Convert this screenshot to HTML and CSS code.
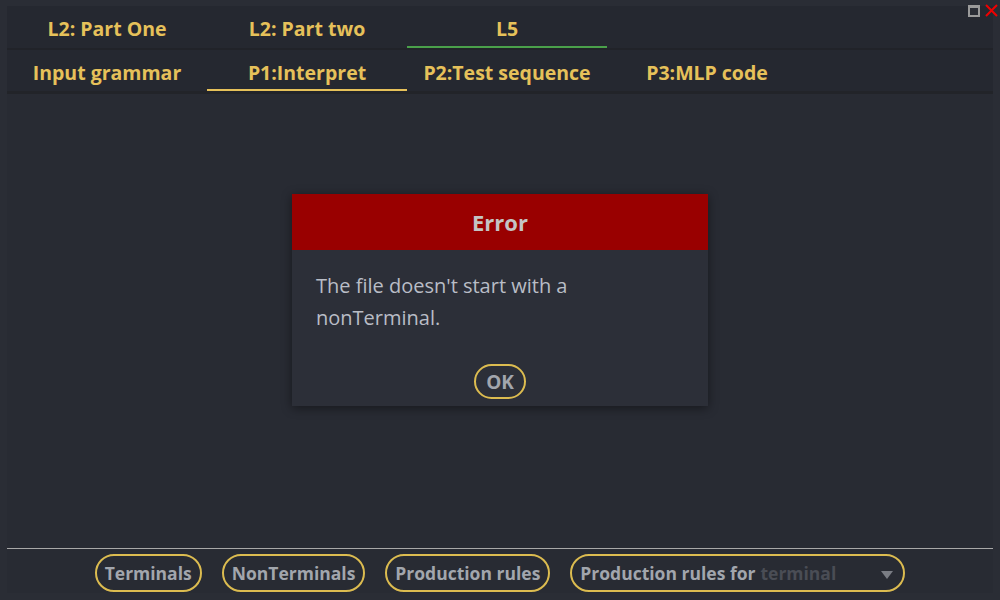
FILE: index.html
```html
<!DOCTYPE html>
<html>
<head>
<meta charset="utf-8">
<link rel="stylesheet" href="styles.css">
</head>
<body>
<div class="app">
  <div class="winctl">
    <span class="max"></span>
    <svg class="close" width="13" height="13" viewBox="0 0 13 13"><path d="M1 1L12 12M12 1L1 12" stroke="#f00000" stroke-width="2"/></svg>
  </div>
  <div class="panel">
    <div class="tabs top">
      <div class="tab">L2: Part One</div>
      <div class="tab">L2: Part two</div>
      <div class="tab active-green">L5</div>
    </div>
    <div class="tabs sub">
      <div class="tab">Input grammar</div>
      <div class="tab active-yellow">P1:Interpret</div>
      <div class="tab">P2:Test sequence</div>
      <div class="tab">P3:MLP code</div>
    </div>
    <div class="content">
      <div class="dialog">
        <div class="dlg-head">Error</div>
        <div class="dlg-body">The file doesn't start with a nonTerminal.</div>
        <div class="dlg-foot"><button class="pill ok">OK</button></div>
      </div>
    </div>
    <div class="footer">
      <button class="pill">Terminals</button>
      <button class="pill">NonTerminals</button>
      <button class="pill">Production rules</button>
      <div class="pill select">Production rules for <span class="ph">terminal</span><span class="arrow"></span></div>
    </div>
  </div>
</div>
</body>
</html>
```
FILE: styles.css
```css
* { box-sizing: border-box; }
html, body { margin: 0; padding: 0; }
body {
  width: 1000px;
  height: 600px;
  background: #2a2d35;
  font-family: "Open Sans", "Noto Sans", sans-serif;
  overflow: hidden;
}
.app {
  position: relative;
  width: 1000px;
  height: 600px;
  padding: 6px 7px 7px 7px;
}
.winctl {
  position: absolute;
  top: 4px;
  right: 2px;
  display: flex;
  gap: 5px;
  align-items: center;
}
.max {
  width: 12px;
  height: 12px;
  border: 2px solid #9a9a9a;
  border-top-width: 3px;
  background: #2a2d35;
}
.panel {
  width: 986px;
  height: 587px;
  background: #282b33;
  display: flex;
  flex-direction: column;
}
.tabs {
  display: flex;
  background: #252830;
}
.tabs.top {
  height: 44px;
  border-bottom: 2px solid #212329;
}
.tabs.sub {
  height: 44px;
  border-bottom: 3px solid #222429;
}
.tab {
  width: 200px;
  text-align: center;
  color: #e6c15a;
  font-weight: 700;
  font-size: 19.5px;
  height: 42px;
}
.tabs.top .tab { line-height: 46px; height: 42px; }
.tabs.sub .tab { line-height: 46px; height: 41px; }
.active-green { box-shadow: inset 0 -2px 0 #4aa04a; }
.active-yellow { box-shadow: inset 0 -2px 0 #e6c15a; }
.content {
  flex: 1;
  display: flex;
  justify-content: center;
  align-items: flex-start;
  padding-top: 100px;
  border-bottom: 1px solid #a8a8a8;
}
.dialog {
  width: 416px;
  background: #2c2f38;
  box-shadow: 0 2px 10px rgba(0,0,0,0.45);
}
.dlg-head {
  height: 56px;
  background: #990000;
  color: #c4c4c4;
  font-weight: 700;
  font-size: 22px;
  text-align: center;
  line-height: 56px;
}
.dlg-body {
  padding: 20px 110px 0 24px;
  color: #b9bdc6;
  font-size: 20px;
  line-height: 32px;
  height: 114px;
}
.dlg-foot {
  display: flex;
  justify-content: center;
  height: 42px;
}
.pill {
  border: 2px solid #dcbc50;
  border-radius: 20px;
  background: transparent;
  color: #a2a6ad;
  font-family: "Open Sans", "Noto Sans", sans-serif;
  font-weight: 700;
  font-size: 17.5px;
  padding: 0 8px;
  height: 38px;
  display: flex;
  align-items: center;
}
.ok {
  height: 35px;
  font-size: 19px;
  padding: 0 10px;
}
.footer {
  height: 44px;
  display: flex;
  justify-content: center;
  align-items: center;
  gap: 20px;
  padding-top: 4px;
}
.select {
  width: 335px;
  position: relative;
}
.ph {
  color: #4a4d55;
  margin-left: 5px;
}
.arrow {
  position: absolute;
  right: 10px;
  top: 15px;
  width: 0;
  height: 0;
  border-left: 6px solid transparent;
  border-right: 6px solid transparent;
  border-top: 8px solid #7a7d84;
}
```
